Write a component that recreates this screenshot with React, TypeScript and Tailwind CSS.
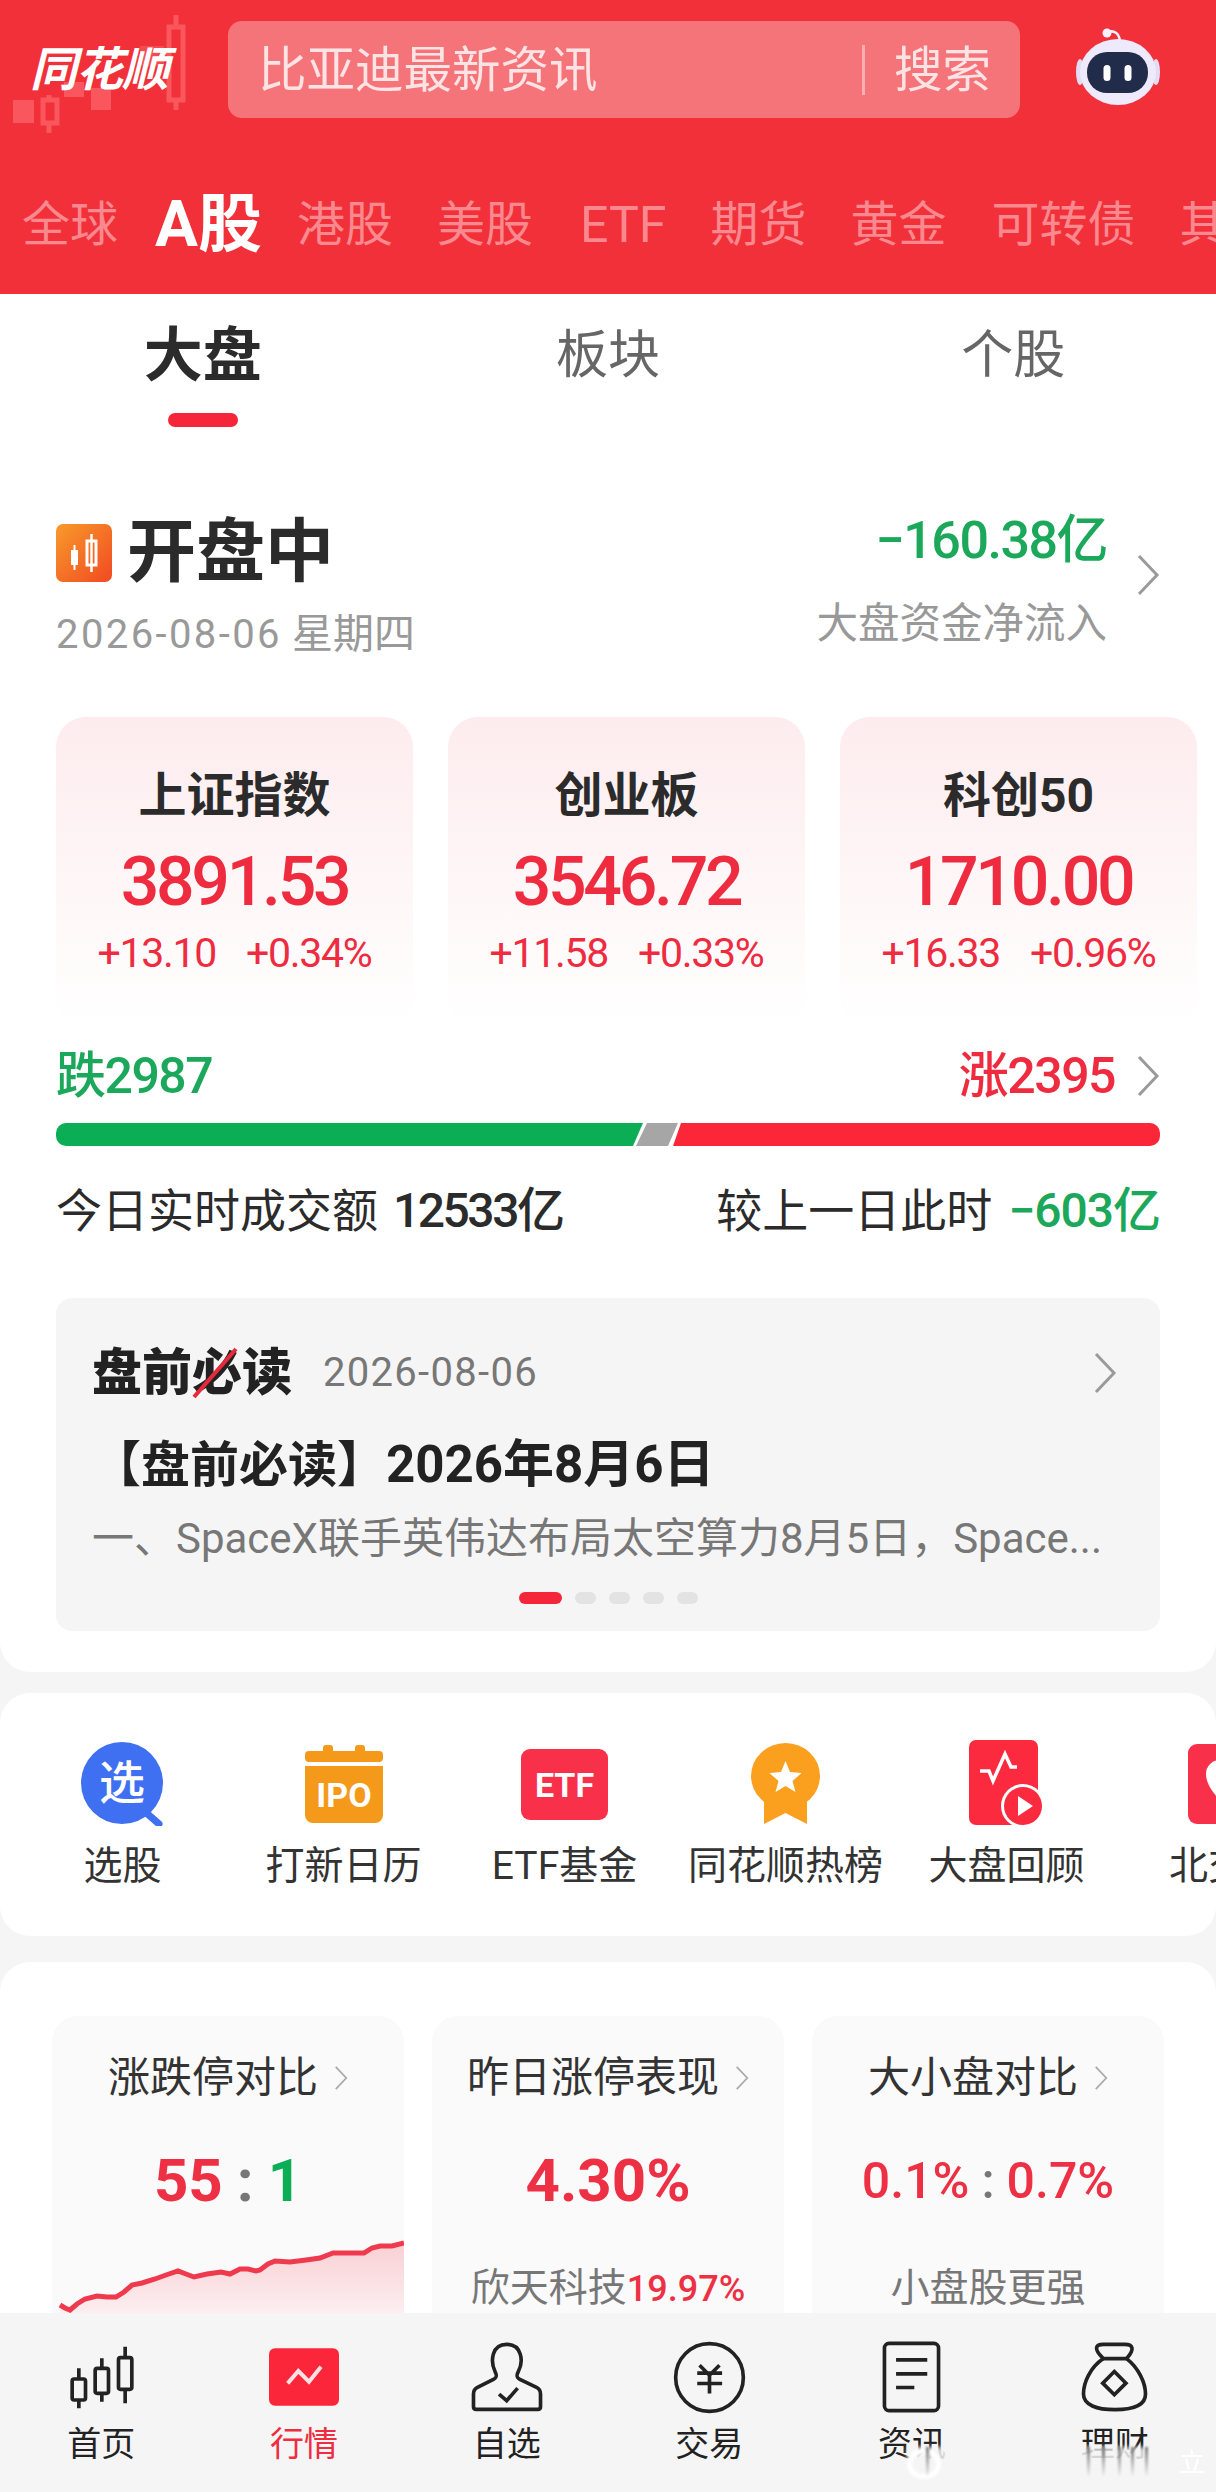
import React from "react";

function Chevron({ className = "w-[24px] h-[42px]", color = "#9a9a9a" }: { className?: string; color?: string }) {
  return (
    <svg viewBox="0 0 24 42" className={className} fill="none">
      <polyline points="3,2 21,21 3,40" stroke={color} strokeWidth="3" />
    </svg>
  );
}

function Candles() {
  return (
    <svg viewBox="0 0 200 135" className="absolute left-0 top-0 w-[200px] h-[135px]" fill="none">
      <g fill="#f9575d" stroke="none">
        <rect x="13" y="100" width="21" height="23" />
        <rect x="91" y="88" width="20" height="22" />
        <rect x="64" y="82" width="20" height="15" />
        <rect x="140" y="46" width="24" height="20" opacity="0.7" />
      </g>
      <g stroke="#f9575d" strokeWidth="5">
        <rect x="43" y="100" width="14" height="23" />
        <line x1="49" y1="95" x2="49" y2="100" />
        <line x1="49" y1="123" x2="49" y2="133" />
        <rect x="169" y="27" width="14" height="73" />
        <line x1="176" y1="15" x2="176" y2="27" />
        <line x1="176" y1="100" x2="176" y2="110" />
      </g>
    </svg>
  );
}

function Robot() {
  return (
    <svg viewBox="0 0 92 84" className="w-[92px] h-[84px]">
      <path d="M36 9 C42 7 47 10 48 18" stroke="#f3eefc" strokeWidth="2.500" fill="none" />
      <circle cx="35" cy="10" r="4.500" fill="#f6f1fd" />
      <ellipse cx="8" cy="49" rx="4" ry="13" fill="#e2dcf6" />
      <ellipse cx="84" cy="49" rx="4" ry="13" fill="#e2dcf6" />
      <ellipse cx="46" cy="49" rx="38" ry="33" fill="#eeeafb" />
      <rect x="15" y="29" width="61" height="41" rx="20" fill="#202c4a" />
      <rect x="31.500" y="42" width="7" height="16" rx="3.500" fill="#ffffff" />
      <rect x="52.500" y="42" width="7" height="16" rx="3.500" fill="#ffffff" />
    </svg>
  );
}

function IndexCard({ name, value, a, b }: { name: string; value: string; a: string; b: string }) {
  return (
    <div className="w-[357px] h-[309px] shrink-0 rounded-[30px] bg-gradient-to-b from-[#fdecee] to-[#ffffff] flex flex-col items-center pt-[51px]">
      <div className="text-[48px] leading-[56px] font-bold text-[#2b2b2b]">{name}</div>
      <div className="mt-[22px] text-[68px] leading-[72px] tracking-[-3.300px] font-medium text-[#ee2b3f]">{value}</div>
      <div className="mt-[13px] flex gap-[30px] text-[41px] leading-[44px] tracking-[-1.300px] text-[#ee2b3f]">
        <span>{a}</span>
        <span>{b}</span>
      </div>
    </div>
  );
}

function SelectIcon() {
  return (
    <svg viewBox="0 0 84 84" className="w-[84px] h-[84px]">
      <path d="M62 68 L78 82" stroke="#3f70f1" strokeWidth="7" strokeLinecap="round" />
      <ellipse cx="41" cy="41" rx="41" ry="41" fill="#3f70f1" />
      <text x="41" y="57" textAnchor="middle" fontSize="46" fontWeight="500" fill="#ffffff">选</text>
    </svg>
  );
}

function IpoIcon() {
  return (
    <svg viewBox="0 0 78 78" className="w-[78px] h-[78px]">
      <rect x="18" y="0" width="10" height="10" rx="3" fill="#f5991b" />
      <rect x="50" y="0" width="10" height="10" rx="3" fill="#f5991b" />
      <rect x="0" y="6" width="78" height="11" rx="4" fill="#f5991b" />
      <path d="M0 21 h78 v49 a8 8 0 0 1 -8 8 h-62 a8 8 0 0 1 -8 -8 z" fill="#f5991b" />
      <text x="39" y="62" textAnchor="middle" fontSize="34" fontWeight="700" fill="#ffffff">IPO</text>
    </svg>
  );
}

function EtfIcon() {
  return (
    <svg viewBox="0 0 87 71" className="w-[87px] h-[71px]">
      <rect width="87" height="71" rx="9" fill="#f9304a" />
      <text x="43.500" y="48" textAnchor="middle" fontSize="34" fontWeight="700" fill="#ffffff">ETF</text>
    </svg>
  );
}

function MedalIcon() {
  return (
    <svg viewBox="0 0 69 82" className="w-[69px] h-[82px]">
      <path d="M13 50 V81 L34.500 70 L56 81 V50 Z" fill="#fba01e" />
      <ellipse cx="34.500" cy="33" rx="34.500" ry="33" fill="#fba01e" />
      <path d="M34.500 18 L39 29 L50.500 30 L41.500 38 L44.500 49 L34.500 43 L24.500 49 L27.500 38 L18.500 30 L30 29 Z" fill="#ffffff" />
    </svg>
  );
}

function ReviewIcon() {
  return (
    <svg viewBox="0 0 76 88" className="w-[76px] h-[88px]">
      <rect x="0" y="0" width="69" height="85" rx="7" fill="#fb2a3f" />
      <path d="M11 31 L20 31 L24 41 L36 14 L42 27 L48 27" stroke="#ffffff" strokeWidth="3.500" fill="none" />
      <circle cx="54" cy="66" r="22" fill="#ffffff" />
      <circle cx="54" cy="66" r="19" fill="#fb2a3f" />
      <path d="M49 56 L64 66 L49 76 Z" fill="#ffffff" />
    </svg>
  );
}

function NorthIcon() {
  return (
    <svg viewBox="0 0 80 80" className="w-[80px] h-[80px]">
      <rect x="0" y="0" width="80" height="80" rx="9" fill="#f9304a" />
      <path d="M18 30 a14 14 0 0 1 28 0 q0 12 -14 26 q-14 -14 -14 -26 z" fill="#ffffff" />
    </svg>
  );
}

function Tool({ icon, label }: { icon: React.ReactNode; label: string }) {
  return (
    <div className="w-[221px] shrink-0 flex flex-col items-center">
      <div className="h-[100px] flex items-center justify-center">{icon}</div>
      <div className="mt-[5px] text-[39px] leading-[54px] text-[#333333] whitespace-nowrap">{label}</div>
    </div>
  );
}

function MiniTitle({ children }: { children: React.ReactNode }) {
  return (
    <div className="flex items-center justify-center gap-[16px] h-[50px] text-[42px] leading-[50px] text-[#333333] whitespace-nowrap">
      <span>{children}</span>
      <Chevron className="w-[14px] h-[30px]" color="#aaaaaa" />
    </div>
  );
}

function LineChart() {
  const pts =
    "8,85 13,88 18,90 25,84 33,79 45,76 55,77 64,77 72,72 80,65 90,63 103,59 114,55 126,51 134,54 142,57 155,54 169,52 178,54 188,49 196,49 204,51 208,50 216,44 223,41 238,42 254,40 268,38 281,33 296,33 312,33 320,28 328,26 340,26 352,23";
  return (
    <svg viewBox="0 0 352 180" className="mt-[4px] w-[352px] h-[180px]">
      <defs>
        <linearGradient id="area" x1="0" y1="0" x2="0" y2="1">
          <stop offset="0" stopColor="#f9d0d4" />
          <stop offset="0.55" stopColor="#fdf5f6" />
        </linearGradient>
      </defs>
      <polygon points={`${pts} 352,180 8,180`} fill="url(#area)" />
      <polyline points={pts} fill="none" stroke="#ee3a4c" strokeWidth="5" />
    </svg>
  );
}

function NavIcon({ name }: { name: string }) {
  const s = { stroke: "#222222", strokeWidth: 11, fill: "none" };
  if (name === "home")
    return (
      <svg viewBox="80 40 200 195" className="w-[67px] h-[65px]">
        <g {...s}>
          <rect x="92" y="142" width="40" height="63" rx="6" />
          <path d="M112 110 V142 M112 205 V230" />
          <rect x="161" y="110" width="40" height="75" rx="6" />
          <path d="M181 80 V110 M181 185 V210" />
          <rect x="231" y="78" width="40" height="95" rx="6" />
          <path d="M251 45 V78 M251 173 V215" />
        </g>
      </svg>
    );
  if (name === "market")
    return (
      <svg viewBox="0 0 210 172" className="w-[70px] h-[58px]">
        <rect width="210" height="172" rx="18" fill="#fb2639" />
        <path d="M56 105 L88 68 L120 100 L156 55" stroke="#fde0e2" strokeWidth="12" fill="none" />
      </svg>
    );
  if (name === "watch")
    return (
      <svg viewBox="1285 33 222 214" className="w-[74px] h-[71px]">
        <g {...s}>
          <path d="M1360 122 C1345 90 1350 40 1395 40 C1440 40 1447 90 1430 122 C1423 135 1425 140 1435 146 L1485 170 Q1497 176 1497 190 V228 Q1497 236 1489 236 H1303 Q1295 236 1295 228 V190 Q1295 176 1307 170 L1355 146 C1365 140 1367 135 1360 122 Z" />
          <path d="M1372 190 L1395 210 L1428 172" />
        </g>
      </svg>
    );
  if (name === "trade")
    return (
      <svg viewBox="35 25 220 220" className="w-[73px] h-[73px]">
        <g {...s}>
          <circle cx="145" cy="135" r="102" />
          <path d="M115 98 L145 128 L175 98 M108 122 H183 M108 153 H183 M145 125 V183" />
        </g>
      </svg>
    );
  if (name === "news")
    return (
      <svg viewBox="663 25 183 223" className="w-[61px] h-[74px]">
        <g {...s}>
          <rect x="673" y="35" width="163" height="203" rx="14" />
          <path d="M708 85 H802 M708 127 H802 M708 168 H763" />
        </g>
      </svg>
    );
  return (
    <svg viewBox="1260 35 207 217" className="w-[69px] h-[72px]">
      <g {...s}>
        <path d="M1330 88 C1300 60 1305 45 1330 45 H1395 C1420 45 1425 60 1400 88 Z" />
        <path d="M1330 88 C1290 115 1270 160 1270 195 C1270 228 1310 242 1365 242 C1420 242 1457 228 1457 195 C1457 160 1435 115 1400 88" />
        <path d="M1363 127 L1398 162 L1363 197 L1328 162 Z" />
      </g>
    </svg>
  );
}

function NavItem({ name, label, active }: { name: string; label: string; active?: boolean }) {
  return (
    <div className="flex flex-col items-center">
      <div className="h-[70px] flex items-center justify-center">
        <NavIcon name={name} />
      </div>
      <div className={`mt-[10px] text-[34px] leading-[44px] ${active ? "text-[#f02c40]" : "text-[#222222]"}`}>{label}</div>
    </div>
  );
}

export default function App() {
  return (
    <div className="relative w-[1216px] h-[2492px] overflow-hidden flex flex-col bg-[#f5f5f5] font-['Roboto','Noto_Sans_CJK_SC',sans-serif]">
      <main className="flex-1 min-h-0 overflow-hidden">
        <header className="relative h-[294px] bg-[#f23039] overflow-hidden">
          <Candles />
          <div className="relative flex items-start pt-[21px]">
            <div className="w-[228px] h-[97px] pl-[30px] flex items-center text-[47px] font-bold italic tracking-[-1px] text-white leading-none">
              同花顺
            </div>
            <div className="w-[792px] h-[97px] rounded-[14px] bg-[#f57479] flex items-center pl-[30px] pr-[29px] text-[48.500px] text-[#fde3e4]">
              <span className="flex-1 mt-[3px]">比亚迪最新资讯</span>
              <span className="w-[3px] h-[50px] bg-[#f9aeb1] mr-[29px]" />
              <span className="mt-[3px]">搜索</span>
            </div>
            <div className="ml-[52px] mt-[2px]">
              <Robot />
            </div>
          </div>
          <div className="relative mt-[72px] pl-[22px] flex items-center text-[48px] leading-[70px] text-[#f9898e] whitespace-nowrap">
            <span>全球</span>
            <span className="ml-[37px] text-[64px] font-bold text-white">A股</span>
            <span className="ml-[35px]">港股</span>
            <span className="ml-[44px]">美股</span>
            <span className="ml-[47px] text-[50px]">ETF</span>
            <span className="ml-[44px]">期货</span>
            <span className="ml-[44px]">黄金</span>
            <span className="ml-[45px]">可转债</span>
            <span className="ml-[44px]">其他</span>
          </div>
        </header>

        <section className="bg-white rounded-b-[30px] h-[1378px]">
          <div className="grid grid-cols-3 text-center pt-[31px]">
            <div className="flex flex-col items-center">
              <div className="text-[59px] leading-[62px] font-bold text-[#2b2b2b]">大盘</div>
              <div className="mt-[26px] w-[70px] h-[14px] rounded-full bg-[#f6263a]" />
            </div>
            <div className="text-[52px] leading-[62px] text-[#666666]">板块</div>
            <div className="text-[52px] leading-[62px] text-[#666666]">个股</div>
          </div>

          <div className="mt-[82px] pl-[56px] pr-[56px] flex justify-between">
            <div className="pt-[9px]">
              <div className="flex items-center h-[70px]">
                <svg viewBox="0 0 56 58" className="w-[56px] h-[58px] mr-[15px]">
                  <defs>
                    <linearGradient id="og" x1="0" y1="0" x2="1" y2="1">
                      <stop offset="0" stopColor="#f99a2a" />
                      <stop offset="1" stopColor="#f04a22" />
                    </linearGradient>
                  </defs>
                  <rect width="56" height="58" rx="7" fill="url(#og)" />
                  <rect x="15" y="26" width="7" height="15" fill="#ffffff" />
                  <line x1="18.500" y1="21" x2="18.500" y2="46" stroke="#ffffff" strokeWidth="2" />
                  <rect x="31" y="17" width="9" height="24" fill="none" stroke="#ffffff" strokeWidth="3" />
                  <line x1="35.500" y1="10" x2="35.500" y2="48" stroke="#ffffff" strokeWidth="2.500" />
                </svg>
                <span className="text-[69px] leading-[70px] font-bold text-[#2b2b2b]">开盘中</span>
              </div>
              <div className="mt-[24px] text-[41px] leading-[44px] text-[#999999] whitespace-nowrap">
                <span className="text-[40px] tracking-[2.400px]">2026-08-06</span> 星期四
              </div>
            </div>
            <div className="flex items-center gap-[26px] -mt-[3px] h-[147px]">
              <div className="flex flex-col items-end">
                <div className="text-[52px] leading-[60px] tracking-[-1.500px] font-medium text-[#1ba85a]">−160.38亿</div>
                <div className="mt-[29px] text-[41.500px] leading-[48px] text-[#999999]">大盘资金净流入</div>
              </div>
              <span className="-mt-[10px] ml-[3px]">
                <Chevron />
              </span>
            </div>
          </div>

          <div className="mt-[60px] pl-[56px] flex gap-[35px]">
            <IndexCard name="上证指数" value="3891.53" a="+13.10" b="+0.34%" />
            <IndexCard name="创业板" value="3546.72" a="+11.58" b="+0.33%" />
            <IndexCard name="科创50" value="1710.00" a="+16.33" b="+0.96%" />
          </div>

          <div className="mt-[22px] px-[56px] flex justify-between items-center text-[50px] leading-[56px] tracking-[-1.500px] font-medium">
            <span className="text-[#1ba85a]">跌2987</span>
            <span className="flex items-center gap-[21px] text-[#ee2b3f]">
              涨2395
              <Chevron />
            </span>
          </div>

          <div className="mt-[19px] mx-[56px] h-[23px] flex">
            <div className="w-[587px] h-full rounded-l-[10px] bg-[#0bae55] [clip-path:polygon(0_0,100%_0,calc(100%-10px)_100%,0_100%)]" />
            <div className="-ml-[7px] w-[42px] h-full bg-[#a6a6a6] [clip-path:polygon(11px_0,100%_0,calc(100%-10px)_100%,0_100%)]" />
            <div className="-ml-[5px] flex-1 h-full rounded-r-[10px] bg-[#fb2738] [clip-path:polygon(8px_0,100%_0,100%_100%,0_100%)]" />
          </div>

          <div className="mt-[37px] px-[56px] flex justify-between text-[46px] leading-[56px] text-[#2b2b2b]">
            <span>
              今日实时成交额<span className="ml-[15px] text-[48px] tracking-[-2.500px] font-medium">12533亿</span>
            </span>
            <span>
              较上一日此时<span className="ml-[16px] text-[48px] tracking-[-1px] font-medium text-[#1ba85a]">−603亿</span>
            </span>
          </div>

          <div className="mt-[59px] mx-[56px] h-[333px] rounded-[16px] bg-[#f5f5f5] px-[36px] pt-[45px]">
            <div className="flex items-center h-[60px]">
              <span className="relative text-[50px] leading-[60px] font-black text-[#222222]">
                盘前必读
                <svg viewBox="0 0 50 60" className="absolute left-[100px] top-0 w-[50px] h-[60px]">
                  <line x1="2" y1="54" x2="44" y2="6" stroke="#e8293c" strokeWidth="4" />
                </svg>
              </span>
              <span className="ml-[31px] text-[40px] leading-[60px] tracking-[1.300px] text-[#777777]">2026-08-06</span>
              <span className="ml-auto mr-[7px]">
                <Chevron />
              </span>
            </div>
            <div className="mt-[32px] text-[49px] leading-[60px] font-bold text-[#222222] whitespace-nowrap">
              【盘前必读】<span className="text-[51px]">2026年8月6日</span>
            </div>
            <div className="mt-[16px] w-[1013px] text-[42px] leading-[54px] text-[#777777] truncate">
              一、SpaceX联手英伟达布局太空算力8月5日，Space...
            </div>
            <div className="mt-[26px] flex justify-center gap-[13px]">
              <span className="w-[43px] h-[12px] rounded-full bg-[#f6263a]" />
              <span className="w-[21px] h-[12px] rounded-full bg-[#e3e3e3]" />
              <span className="w-[21px] h-[12px] rounded-full bg-[#e3e3e3]" />
              <span className="w-[21px] h-[12px] rounded-full bg-[#e3e3e3]" />
              <span className="w-[21px] h-[12px] rounded-full bg-[#e3e3e3]" />
            </div>
          </div>
        </section>

        <section className="mt-[21px] h-[243px] rounded-[30px] bg-white pt-[41px] pl-[12px] flex overflow-hidden">
          <Tool icon={<SelectIcon />} label="选股" />
          <Tool icon={<IpoIcon />} label="打新日历" />
          <Tool icon={<EtfIcon />} label="ETF基金" />
          <Tool icon={<MedalIcon />} label="同花顺热榜" />
          <Tool icon={<ReviewIcon />} label="大盘回顾" />
          <Tool icon={<NorthIcon />} label="北交所" />
        </section>

        <section className="mt-[26px] rounded-t-[30px] bg-white pt-[54px] pl-[52px] flex gap-[28px] h-[500px]">
          <div className="w-[352px] h-[420px] shrink-0 rounded-[26px] bg-[#fafafa] pt-[37px] overflow-hidden">
            <MiniTitle>涨跌停对比</MiniTitle>
            <div className="mt-[43px] h-[70px] flex items-center justify-center gap-[14px] text-[60px] leading-[70px] font-bold text-[#ee3044]">
              <span>55</span>
              <span className="text-[#777777]">:</span>
              <span className="text-[#0bae55]">1</span>
            </div>
            <LineChart />
          </div>
          <div className="w-[352px] h-[420px] shrink-0 rounded-[26px] bg-[#fafafa] pt-[37px]">
            <MiniTitle>昨日涨停表现</MiniTitle>
            <div className="mt-[43px] h-[70px] text-center text-[60px] leading-[70px] font-bold text-[#ee3044]">4.30%</div>
            <div className="mt-[47px] text-center text-[39px] leading-[50px] text-[#777777] whitespace-nowrap">
              欣天科技<span className="text-[36px] font-medium text-[#ee3044]">19.97%</span>
            </div>
          </div>
          <div className="w-[352px] h-[420px] shrink-0 rounded-[26px] bg-[#fafafa] pt-[37px]">
            <MiniTitle>大小盘对比</MiniTitle>
            <div className="mt-[43px] h-[70px] flex items-center justify-center gap-[12px] text-[50px] leading-[70px] font-medium text-[#ee3044]">
              <span>0.1%</span>
              <span className="text-[#777777]">:</span>
              <span>0.7%</span>
            </div>
            <div className="mt-[47px] text-center text-[39px] leading-[50px] text-[#777777]">小盘股更强</div>
          </div>
        </section>
      </main>

      <nav className="h-[179px] shrink-0 bg-[#f5f5f5] grid grid-cols-6 pt-[29px]">
        <NavItem name="home" label="首页" />
        <NavItem name="market" label="行情" active />
        <NavItem name="watch" label="自选" />
        <NavItem name="trade" label="交易" />
        <NavItem name="news" label="资讯" />
        <NavItem name="wealth" label="理财" />
      </nav>

      <div className="absolute left-[907px] top-[2447px] w-[300px] h-[33px]">
        <div className="absolute inset-0 bg-[#f5f5f5]/85 blur-[2px]" />
        <div className="absolute left-[0px] top-[2px] w-[34px] h-[30px] rounded-full border-[5px] border-white blur-[1.500px]" />
        <div className="absolute left-[19px] top-0 w-[3px] h-[30px] bg-gradient-to-b from-[#777777] to-transparent blur-[1px]" />
        <div className="absolute left-[180px] top-0 w-[3px] h-[30px] bg-gradient-to-b from-[#777777] to-transparent blur-[1px]" />
        <div className="absolute left-[195px] top-0 w-[3px] h-[30px] bg-gradient-to-b from-[#777777] to-transparent blur-[1px]" />
        <div className="absolute left-[211px] top-0 w-[3px] h-[30px] bg-gradient-to-b from-[#777777] to-transparent blur-[1px]" />
        <div className="absolute left-[224px] top-0 w-[3px] h-[30px] bg-gradient-to-b from-[#777777] to-transparent blur-[1px]" />
        <div className="absolute left-[238px] top-0 w-[3px] h-[30px] bg-gradient-to-b from-[#777777] to-transparent blur-[1px]" />
        <div className="absolute right-[2px] top-0 text-[26px] leading-[32px] text-white blur-[0.500px]">立</div>
      </div>
    </div>
  );
}
